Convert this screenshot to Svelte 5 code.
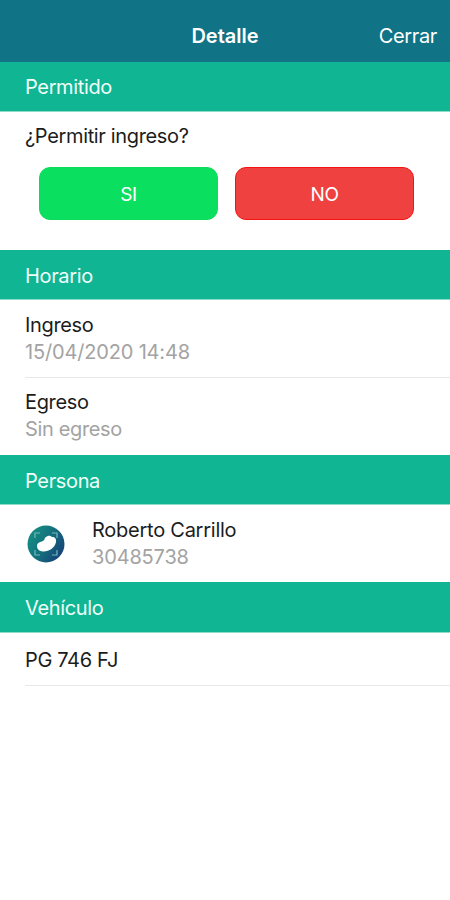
<script>
  const times = [
    { label: "Ingreso", value: "15/04/2020 14:48", numeric: true },
    { label: "Egreso", value: "Sin egreso", numeric: false }
  ];

  const person = { name: "Roberto Carrillo", document: "30485738" };
  const plate = "PG 746 FJ";

  let allowed = null;
</script>

<style>
  :global(body) {
    margin: 0;
    background: #fff;
  }

  .page {
    min-height: 900px;
    font-family: Inter, sans-serif;
    font-size: 20px;
    line-height: 28px;
    letter-spacing: -0.35px;
    color: #1c1c1c;
    background: #fff;
  }

  header {
    display: grid;
    grid-template-columns: 1fr auto 1fr;
    align-items: center;
    box-sizing: border-box;
    height: 62px;
    padding: 10px 13px 0;
    color: #fff;
    background: #107386;
  }

  h1 {
    grid-column: 2;
    margin: 0;
    font-size: 20px;
    font-weight: 600;
    letter-spacing: 0;
  }

  button {
    padding: 0;
    border: 0;
    font: inherit;
    letter-spacing: inherit;
    color: #fff;
    background: none;
    cursor: pointer;
  }

  .close {
    justify-self: end;
  }

  h2 {
    box-sizing: border-box;
    height: 50px;
    margin: 0;
    padding: 12px 25px 0;
    border-bottom: 1px solid #8fdccb;
    font-size: 20px;
    font-weight: 400;
    color: #f0fffa;
    background: #10b593;
  }

  header + h2 {
    padding-top: 11px;
  }

  h2.tall {
    height: 51px;
  }

  p {
    margin: 0;
  }

  .question {
    box-sizing: border-box;
    height: 138px;
    padding: 10px 36px 0 25px;
  }

  .answers {
    display: grid;
    grid-template-columns: 1fr 1fr;
    gap: 17px;
    margin: 17px 0 0 14px;
  }

  .answers button {
    height: 53px;
    padding-top: 2px;
    border: 1px solid #0bdc5c;
    border-radius: 11px;
    font-size: 19px;
    background: #0bdf5f;
  }

  .answers .no {
    border-color: #f51414;
    background: #f04141;
  }

  .item {
    box-sizing: border-box;
    height: 78px;
    margin-left: 25px;
    padding-top: 11px;
    border-bottom: 1px solid #e8e8e8;
  }

  .item.last {
    height: 77px;
    padding-top: 10px;
    border-bottom: 0;
  }

  .value {
    line-height: 27px;
    color: #a3a3a3;
  }

  .numeric {
    letter-spacing: -0.17px;
  }

  .item.person {
    display: flex;
    gap: 25px;
    padding-top: 11px;
    letter-spacing: -0.25px;
  }

  .avatar {
    width: 42px;
    height: 42px;
    margin-top: 7px;
  }

  .item.plate {
    height: 53px;
    padding-top: 13px;
  }
</style>

<div class="page">
  <header>
    <h1>Detalle</h1>
    <button class="close">Cerrar</button>
  </header>

  <h2>Permitido</h2>
  <div class="question">
    <p>¿Permitir ingreso?</p>
    <div class="answers">
      <button class="yes" on:click={() => (allowed = true)}>SI</button>
      <button class="no" on:click={() => (allowed = false)}>NO</button>
    </div>
  </div>

  <h2>Horario</h2>
  {#each times as time, i}
    <div class="item" class:last={i === times.length - 1}>
      <p>{time.label}</p>
      <p class="value" class:numeric={time.numeric}>{time.value}</p>
    </div>
  {/each}

  <h2>Persona</h2>
  <div class="item last person">
    <svg class="avatar" viewBox="0 0 42 42" aria-hidden="true">
      <defs>
        <linearGradient id="avatar-fill" x1="0" y1="0.2" x2="1" y2="0.8">
          <stop offset="0" stop-color="#159184" />
          <stop offset="0.5" stop-color="#146f7d" />
          <stop offset="1" stop-color="#173c78" />
        </linearGradient>
      </defs>
      <circle cx="21" cy="21" r="18.5" fill="url(#avatar-fill)" />
      <path
        d="M10 15v-5h5M27 10h5v5M32 27v5h-5M15 32h-5v-5"
        fill="none"
        stroke="#79b5bd"
        stroke-width="1.2" />
      <path
        d="M12 23c0-4 4-4 6-5 2-1 1-4 5-5 2-.5 3 .5 4 1 3-.5 4.500 2 4 5-1 6-8 10-13 9.500-4-.3-6-2.500-6-5.500z"
        fill="#fff" />
    </svg>
    <div>
      <p>{person.name}</p>
      <p class="value numeric">{person.document}</p>
    </div>
  </div>

  <h2 class="tall">Vehículo</h2>
  <div class="item plate">
    <p>{plate}</p>
  </div>
</div>
